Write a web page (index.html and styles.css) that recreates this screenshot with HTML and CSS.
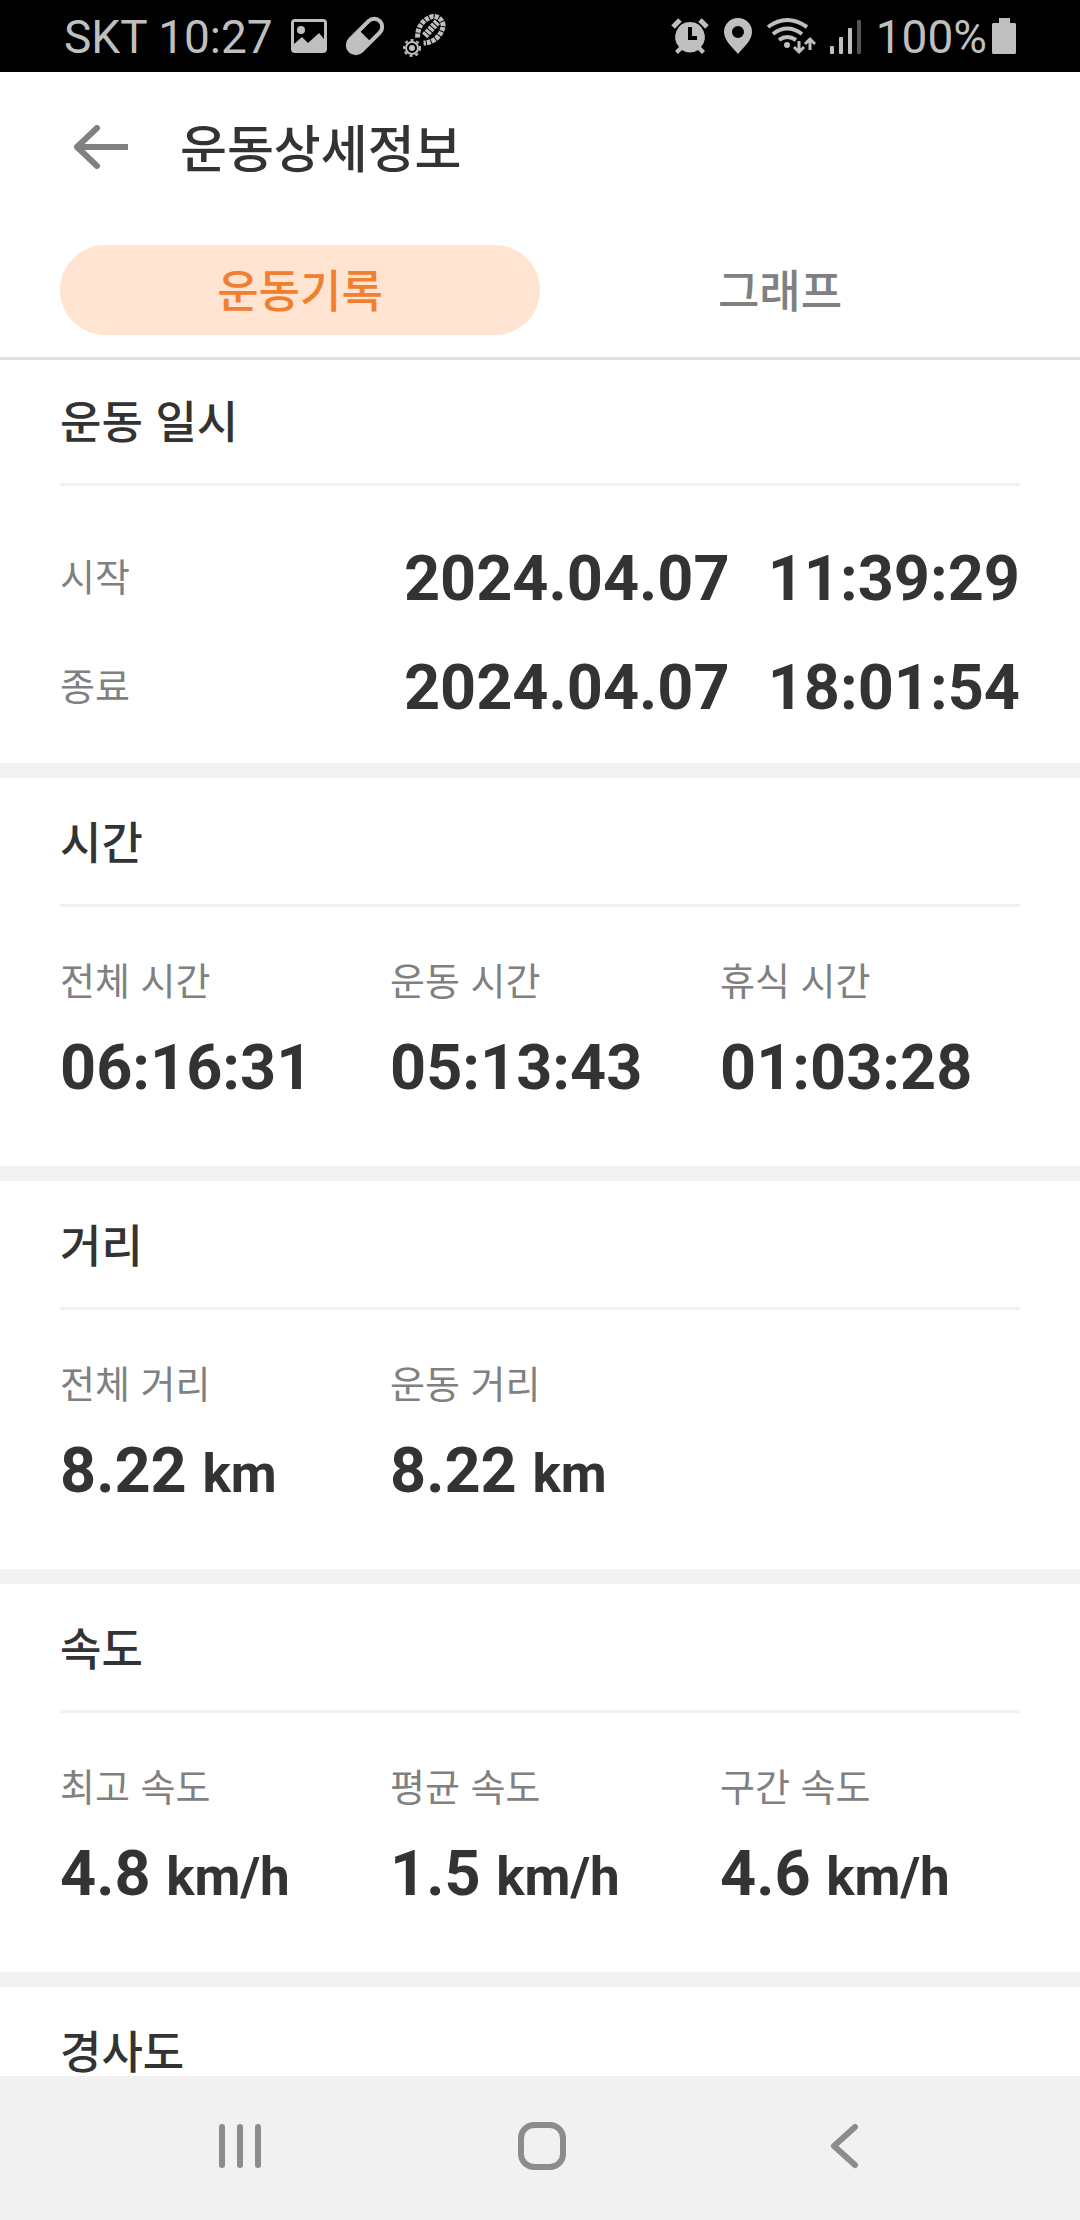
FILE: index.html
```html
<!DOCTYPE html>
<html lang="ko">

<head>
    <meta charset="UTF-8">
    <meta name="viewport" content="width=device-width, initial-scale=1.0">
    <title>운동상세정보</title>
    <link rel="stylesheet" href="styles.css">
</head>

<body>
    <!-- Status bar -->
    <div class="status-bar">
        <div class="status-left">
            <span class="status-text">SKT 10:27</span>
            <svg width="36" height="34" viewBox="0 0 36 34">
                <path fill-rule="evenodd" d="M4 0h28a4 4 0 0 1 4 4v26a4 4 0 0 1-4 4H4a4 4 0 0 1-4-4V4a4 4 0 0 1 4-4zM3 3v22l8-7 6 6 11-10 5 6V3z" />
                <circle cx="10" cy="11" r="4" />
            </svg>
            <svg width="40" height="40" viewBox="0 0 40 40">
                <g transform="rotate(45 20 20)">
                    <rect x="12" y="-1" width="16" height="42" rx="8" fill="none" stroke="#bfbfbf" stroke-width="4" />
                    <path d="M11 20h18v13a9 9 0 0 1-18 0z" />
                </g>
            </svg>
            <svg width="42" height="40" viewBox="0 0 42 40">
                <g transform="rotate(42 27 14)" fill="none" stroke="#bfbfbf">
                    <path d="M23 28C15 20 15 10 20 2q7-6 14 0c5 8 5 18-3 26" stroke-width="5" stroke-dasharray="4 1" />
                    <path d="M27 3v19" stroke-width="7" stroke-dasharray="3 1" />
                </g>
                <circle cx="9" cy="32" r="6" fill="none" stroke="#bfbfbf" stroke-width="2" />
                <circle cx="9" cy="32" r="8" fill="none" stroke="#bfbfbf" stroke-width="2" stroke-dasharray="3 3" />
                <circle cx="9" cy="32" r="3" />
            </svg>
        </div>
        <div class="status-right">
            <svg width="38" height="36" viewBox="0 0 38 36">
                <path fill-rule="evenodd" d="M19 4a15 15 0 0 1 11 25l4 4-3 3-4-4a15 15 0 0 1-16 0l-4 4-3-3 4-4A15 15 0 0 1 19 4zM17 9v13h9v-4h-5V9z" />
                <path d="M2 9l7-7M36 9l-7-7" stroke="#bfbfbf" stroke-width="5" />
            </svg>
            <svg width="28" height="36" viewBox="0 0 28 36">
                <path fill-rule="evenodd" d="M14 0a14 14 0 0 1 14 14c0 8-8 15-14 22C8 29 0 22 0 14A14 14 0 0 1 14 0zM14 8a6 6 0 1 0 0 12 6 6 0 0 0 0-12z" />
            </svg>
            <svg width="48" height="36" viewBox="0 0 48 36">
                <g fill="none" stroke="#bfbfbf" stroke-width="4">
                    <path d="M1 9Q20-5 40 9M6 16q14-11 29 0M12 22q8-6 17 0" />
                    <path d="M32 23v10M27 29l5 5 5-5M43 32V22M38 26l5-5 5 5" stroke-width="3" />
                </g>
                <circle cx="20" cy="27" r="3" />
            </svg>
            <svg width="31" height="36" viewBox="0 0 31 36">
                <rect x="0" y="28" width="4" height="8" rx="1" />
                <rect x="9" y="19" width="4" height="17" rx="1" />
                <rect x="18" y="10" width="4" height="26" rx="1" />
                <rect x="27" y="2" width="4" height="34" rx="1" fill="#555" />
            </svg>
            <div class="battery">
                <span class="status-text">100%</span>
                <svg width="24" height="36" viewBox="0 0 24 36">
                    <path d="M7 0h11v5h5l1 1v29l-1 1H1l-1-1V6l1-1h6z" />
                </svg>
            </div>
        </div>
    </div>

    <!-- Header -->
    <header class="top">
        <div class="title-row">
            <button type="button" class="back-btn" aria-label="뒤로">
                <svg width="54" height="44" viewBox="0 0 54 44">
                    <path d="M23 3L3 22l20 19M3 22h51" />
                </svg>
            </button>
            <h1>운동상세정보</h1>
        </div>
        <div class="tabs">
            <button type="button" class="tab active">운동기록</button>
            <button type="button" class="tab">그래프</button>
        </div>
    </header>

    <!-- Records -->
    <main class="content">
        <section class="card">
            <h2>운동 일시</h2>
            <dl class="dates">
                <div class="date-row">
                    <dt>시작</dt>
                    <dd><span>2024.04.07</span><span>11:39:29</span></dd>
                </div>
                <div class="date-row">
                    <dt>종료</dt>
                    <dd><span>2024.04.07</span><span>18:01:54</span></dd>
                </div>
            </dl>
        </section>

        <section class="card">
            <h2>시간</h2>
            <dl class="stats">
                <div class="stat">
                    <dt>전체 시간</dt>
                    <dd>06:16:31</dd>
                </div>
                <div class="stat">
                    <dt>운동 시간</dt>
                    <dd>05:13:43</dd>
                </div>
                <div class="stat">
                    <dt>휴식 시간</dt>
                    <dd>01:03:28</dd>
                </div>
            </dl>
        </section>

        <section class="card">
            <h2>거리</h2>
            <dl class="stats">
                <div class="stat">
                    <dt>전체 거리</dt>
                    <dd>8.22 <span class="unit">km</span></dd>
                </div>
                <div class="stat">
                    <dt>운동 거리</dt>
                    <dd>8.22 <span class="unit">km</span></dd>
                </div>
            </dl>
        </section>

        <section class="card">
            <h2>속도</h2>
            <dl class="stats">
                <div class="stat">
                    <dt>최고 속도</dt>
                    <dd>4.8 <span class="unit">km/h</span></dd>
                </div>
                <div class="stat">
                    <dt>평균 속도</dt>
                    <dd>1.5 <span class="unit">km/h</span></dd>
                </div>
                <div class="stat">
                    <dt>구간 속도</dt>
                    <dd>4.6 <span class="unit">km/h</span></dd>
                </div>
            </dl>
        </section>

        <section class="card">
            <h2>경사도</h2>
        </section>
    </main>

    <!-- Navigation bar -->
    <nav class="nav-bar">
        <button type="button" aria-label="최근 앱">
            <svg width="48" height="48" viewBox="0 0 48 48">
                <path d="M6 5v38M24 5v38M42 5v38" />
            </svg>
        </button>
        <button type="button" aria-label="홈">
            <svg width="48" height="48" viewBox="0 0 48 48">
                <rect x="3" y="3" width="42" height="42" rx="13" />
            </svg>
        </button>
        <button type="button" aria-label="이전">
            <svg width="48" height="48" viewBox="0 0 48 48">
                <path d="M35 5L14 24l21 19" />
            </svg>
        </button>
    </nav>
</body>

</html>
```
FILE: styles.css
```css
* {
    box-sizing: border-box;
}

body {
    display: flex;
    flex-direction: column;
    height: 100vh;
    margin: 0;
    background-color: #fff;
    color: #333;
    font-family: "Noto Sans CJK KR", sans-serif;
}

h1, h2, dl, dd {
    margin: 0;
}

button {
    padding: 0;
    border: none;
    background: none;
    font-family: inherit;
    cursor: pointer;
}

svg {
    display: block;
}

/* Status bar */
.status-bar {
    display: flex;
    flex: none;
    justify-content: space-between;
    height: 72px;
    padding: 0 64px;
    background-color: #000;
    color: #bfbfbf;
}

.status-bar svg {
    fill: #bfbfbf;
    overflow: visible;
}

.status-left,
.status-right {
    display: flex;
    align-items: center;
    gap: 18px;
}

.status-right {
    gap: 15px;
}

.status-text {
    padding-top: 3px;
    font-family: Roboto, sans-serif;
    font-size: 46px;
    line-height: 69px;
}

.battery {
    display: flex;
    align-items: center;
    gap: 5px;
}

/* Header with tabs */
.top {
    position: relative;
    flex: none;
    padding-bottom: 22px;
    background-color: #fff;
    box-shadow: 0 3px 0 #e0e0e0;
    z-index: 1;
}

.title-row {
    display: flex;
    align-items: center;
    gap: 52px;
    height: 150px;
    padding: 0 74px;
}

.back-btn path {
    fill: none;
    stroke: #808080;
    stroke-width: 6;
    stroke-linecap: round;
    stroke-linejoin: round;
}

.title-row h1 {
    padding-bottom: 2px;
    font-size: 51px;
    font-weight: 500;
    line-height: 76px;
}

.tabs {
    display: flex;
    margin-top: 23px;
    padding: 0 60px;
}

.tab {
    flex: 1;
    height: 90px;
    padding-bottom: 2px;
    border-radius: 45px;
    color: #808080;
    font-size: 45px;
    font-weight: 500;
    line-height: 88px;
}

.tab.active {
    background-color: #ffe4d2;
    color: #f08030;
}

/* Record sections */
.content {
    flex: 1;
    min-height: 0;
    overflow-y: auto;
    scrollbar-width: none;
}

.card + .card {
    border-top: 15px solid #f1f2f4;
}

.card h2 {
    margin: 0 60px;
    padding: 37px 0;
    border-bottom: 3px solid #f1f2f4;
    font-size: 45px;
    font-weight: 500;
    line-height: 52px;
}

dt {
    color: #808080;
    font-size: 38px;
    line-height: 56px;
}

dd {
    font-family: Roboto, sans-serif;
    font-size: 63px;
    font-weight: 700;
    line-height: 76px;
}

.unit {
    font-size: 53px;
    line-height: 1;
}

.dates {
    padding: 38px 60px 21px;
}

.date-row {
    display: flex;
    justify-content: space-between;
    align-items: center;
    height: 109px;
}

.date-row dt {
    padding-bottom: 8px;
}

.date-row dd {
    display: flex;
    gap: 38px;
}

.stats {
    display: grid;
    grid-template-columns: repeat(3, 1fr);
    padding: 44px 30px 60px 60px;
}

.stat dd {
    margin-top: 23px;
}

/* Navigation bar */
.nav-bar {
    display: flex;
    flex: none;
    justify-content: center;
    height: 144px;
    padding: 0 85px 4px 89px;
    background-color: #f1f1f1;
}

.nav-bar button {
    display: flex;
    flex: 1;
    align-items: center;
    justify-content: center;
}

.nav-bar svg {
    fill: none;
    stroke: #8c8c8c;
    stroke-width: 6;
    stroke-linecap: round;
    stroke-linejoin: round;
}
```
